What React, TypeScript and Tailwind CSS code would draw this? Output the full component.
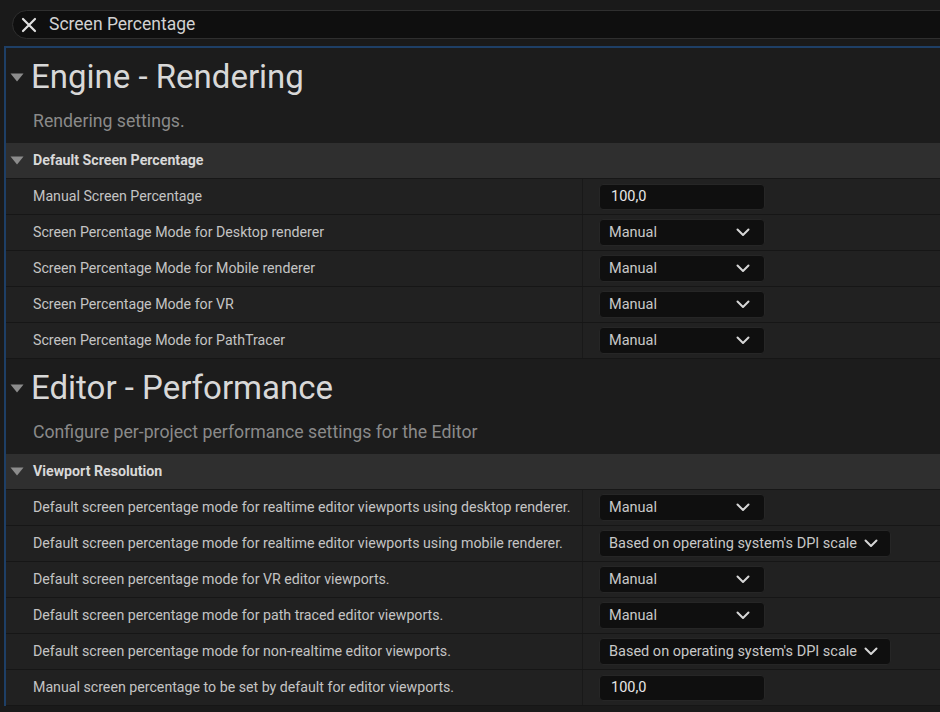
import React from "react";

type Row = { label: string; kind: "num" | "select"; value: string; wide?: boolean };

const engineRows: Row[] = [
  { label: "Manual Screen Percentage", kind: "num", value: "100,0" },
  { label: "Screen Percentage Mode for Desktop renderer", kind: "select", value: "Manual" },
  { label: "Screen Percentage Mode for Mobile renderer", kind: "select", value: "Manual" },
  { label: "Screen Percentage Mode for VR", kind: "select", value: "Manual" },
  { label: "Screen Percentage Mode for PathTracer", kind: "select", value: "Manual" },
];

const editorRows: Row[] = [
  { label: "Default screen percentage mode for realtime editor viewports using desktop renderer.", kind: "select", value: "Manual" },
  { label: "Default screen percentage mode for realtime editor viewports using mobile renderer.", kind: "select", value: "Based on operating system's DPI scale", wide: true },
  { label: "Default screen percentage mode for VR editor viewports.", kind: "select", value: "Manual" },
  { label: "Default screen percentage mode for path traced editor viewports.", kind: "select", value: "Manual" },
  { label: "Default screen percentage mode for non-realtime editor viewports.", kind: "select", value: "Based on operating system's DPI scale", wide: true },
  { label: "Manual screen percentage to be set by default for editor viewports.", kind: "num", value: "100,0" },
];

function Triangle({ className }: { className?: string }) {
  return (
    <svg width="14" height="9" viewBox="0 0 14 9" className={className}>
      <path d="M0.5 0.5 L13.5 0.5 L7 8.5 Z" fill="#8c8c8c" />
    </svg>
  );
}

function Chevron() {
  return (
    <svg width="14" height="9" viewBox="0 0 14 9" className="shrink-0">
      <path d="M1.5 1.5 L7 7 L12.5 1.5" fill="none" stroke="#d6d6d6" strokeWidth="2" strokeLinecap="round" strokeLinejoin="round" />
    </svg>
  );
}

function Value({ row }: { row: Row }) {
  if (row.kind === "num") {
    return (
      <div className="w-[166px] h-[26px] rounded-[4px] bg-[#0f0f0f] border border-[#262626] flex items-center pl-[11px] text-[14.5px] text-[#e6e6e6]">
        {row.value}
      </div>
    );
  }
  return (
    <div
      className={
        row.wide
          ? "w-[292px] h-[27px] rounded-[4px] bg-[#0f0f0f] border border-[#262626] flex items-center pl-[9px] pr-[14px] gap-[7px] text-[14.5px] text-[#c8c8c8]"
          : "w-[166px] h-[27px] rounded-[4px] bg-[#0f0f0f] border border-[#262626] flex items-center justify-between pl-[9px] pr-[14px] text-[14.5px] text-[#c8c8c8]"
      }
    >
      <span className="whitespace-nowrap">{row.value}</span>
      <Chevron />
    </div>
  );
}

function Section({ title, desc, category, rows }: { title: string; desc: string; category: string; rows: Row[] }) {
  return (
    <div>
      <div className="h-[95px] flex flex-col">
        <div className="h-[56px] flex items-center">
          <Triangle className="ml-[4px] mr-[7px] mt-[2px]" />
          <span className="text-[33px] text-[#d8d8d8] leading-none">{title}</span>
        </div>
        <div className="pl-[27px] pt-[9px] text-[17.7px] text-[#8a8a8a] leading-none">{desc}</div>
      </div>
      <div className="h-[36px] bg-[#2f2f2f] border-b border-[#171717] flex items-center">
        <Triangle className="ml-[4px] mr-[9px]" />
        <span className="text-[14.2px] font-bold text-[#d8d8d8]">{category}</span>
      </div>
      {rows.map((r) => (
        <div key={r.label} className="h-[36px] bg-[#212121] border-b border-[#161616] flex">
          <div className="w-[577px] border-r border-[#191919] flex items-center pl-[27px] text-[14.2px] text-[#c4c4c4] whitespace-nowrap">
            {r.label}
          </div>
          <div className="flex-1 flex items-center pl-[16px]">
            <Value row={r} />
          </div>
        </div>
      ))}
    </div>
  );
}

export default function App() {
  return (
    <div className="w-[940px] h-[712px] bg-[#1a1a1a] overflow-hidden" style={{ fontFamily: "Roboto, 'Noto Sans', sans-serif" }}>
      <div className="h-[46px] pt-[10px] pl-[12px]">
        <div className="w-[960px] h-[29px] rounded-l-full border border-[#2f2f2f] bg-[#0f0f0f] flex items-center">
          <svg width="16" height="16" viewBox="0 0 16 16" className="ml-[8px] mr-[12px]">
            <path d="M2 2 L14 14 M14 2 L2 14" stroke="#e0e0e0" strokeWidth="2.2" strokeLinecap="round" />
          </svg>
          <span className="text-[17.5px] text-[#d2d2d2]">Screen Percentage</span>
        </div>
      </div>
      <div className="ml-[4px] border-l-2 border-t-2 border-[#1e3f66] bg-[#1c1c1c]">
        <Section title="Engine - Rendering" desc="Rendering settings." category="Default Screen Percentage" rows={engineRows} />
        <Section
          title="Editor - Performance"
          desc="Configure per-project performance settings for the Editor"
          category="Viewport Resolution"
          rows={editorRows}
        />
      </div>
    </div>
  );
}
